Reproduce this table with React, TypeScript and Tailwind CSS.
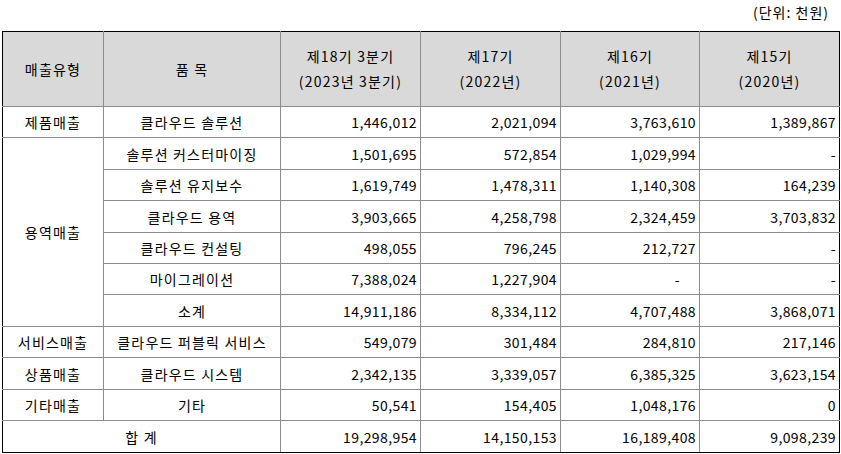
const periods = [
  ['제18기 3분기', '(2023년 3분기)'],
  ['제17기', '(2022년)'],
  ['제16기', '(2021년)'],
  ['제15기', '(2020년)'],
]

type Row = {
  type?: string
  span?: number
  item: string
  values: string[]
  h: string
}

const rows: Row[] = [
  { type: '제품매출', item: '클라우드 솔루션', values: ['1,446,012', '2,021,094', '3,763,610', '1,389,867'], h: 'h-[31px]' },
  { type: '용역매출', span: 6, item: '솔루션 커스터마이징', values: ['1,501,695', '572,854', '1,029,994', '-'], h: 'h-[32px]' },
  { item: '솔루션 유지보수', values: ['1,619,749', '1,478,311', '1,140,308', '164,239'], h: 'h-[31px]' },
  { item: '클라우드 용역', values: ['3,903,665', '4,258,798', '2,324,459', '3,703,832'], h: 'h-[32px]' },
  { item: '클라우드 컨설팅', values: ['498,055', '796,245', '212,727', '-'], h: 'h-[31px]' },
  { item: '마이그레이션', values: ['7,388,024', '1,227,904', '-', '-'], h: 'h-[31px]' },
  { item: '소계', values: ['14,911,186', '8,334,112', '4,707,488', '3,868,071'], h: 'h-[32px]' },
  { type: '서비스매출', item: '클라우드 퍼블릭 서비스', values: ['549,079', '301,484', '284,810', '217,146'], h: 'h-[31px]' },
  { type: '상품매출', item: '클라우드 시스템', values: ['2,342,135', '3,339,057', '6,385,325', '3,623,154'], h: 'h-[32px]' },
  { type: '기타매출', item: '기타', values: ['50,541', '154,405', '1,048,176', '0'], h: 'h-[31px]' },
]

const cell = 'border border-[#8c8c8c] p-0'
const kr = 'tracking-[1.2px] whitespace-nowrap'
const num = 'tracking-[0.4px] text-right pr-[3px]'

export default function App() {
  return (
    <div className="w-[841px] h-[454px] bg-white text-black text-[14px] leading-[20px] font-['Noto_Sans_CJK_KR','Liberation_Sans',sans-serif] overflow-hidden">
      <div className="h-[31px] flex justify-end items-start pt-[2px] pr-[12px] tracking-[1px]">(단위: 천원)</div>
      <table className="ml-[2px] w-[837px] table-fixed border-collapse border border-black">
        <colgroup>
          <col className="w-[101px]" />
          <col className="w-[177px]" />
          <col className="w-[140px]" />
          <col className="w-[140px]" />
          <col className="w-[139px]" />
          <col className="w-[140px]" />
        </colgroup>
        <thead>
          <tr className="h-[75px] bg-[#d9d9d9]">
            <th className={`${cell} ${kr} font-normal text-center border-l-black border-t-black`}>매출유형</th>
            <th className={`${cell} ${kr} font-normal text-center border-t-black`}>품 목</th>
            {periods.map(([a, b], i) => (
              <th
                key={a}
                className={`${cell} ${kr} font-normal text-center leading-[25px] border-t-black ${i === 3 ? 'border-r-black' : ''}`}
              >
                <div>{a}</div>
                <div>{b}</div>
              </th>
            ))}
          </tr>
        </thead>
        <tbody>
          {rows.map((r) => (
            <tr key={r.item} className={r.h}>
              {r.type && (
                <td rowSpan={r.span} className={`${cell} ${kr} text-center border-l-black`}>
                  {r.type}
                </td>
              )}
              <td className={`${cell} ${kr} text-center`}>{r.item}</td>
              {r.values.map((v, i) => (
                <td
                  key={i}
                  className={`${cell} ${num} ${i === 3 ? 'border-r-black' : ''} ${v === '-' && i === 2 ? 'pr-[19px]' : ''}`}
                >
                  {v}
                </td>
              ))}
            </tr>
          ))}
          <tr className="h-[32px]">
            <td colSpan={2} className={`${cell} ${kr} text-center border-l-black border-b-black`}>
              합 계
            </td>
            {['19,298,954', '14,150,153', '16,189,408', '9,098,239'].map((v, i) => (
              <td key={i} className={`${cell} ${num} border-b-black ${i === 3 ? 'border-r-black' : ''}`}>
                {v}
              </td>
            ))}
          </tr>
        </tbody>
      </table>
    </div>
  )
}
